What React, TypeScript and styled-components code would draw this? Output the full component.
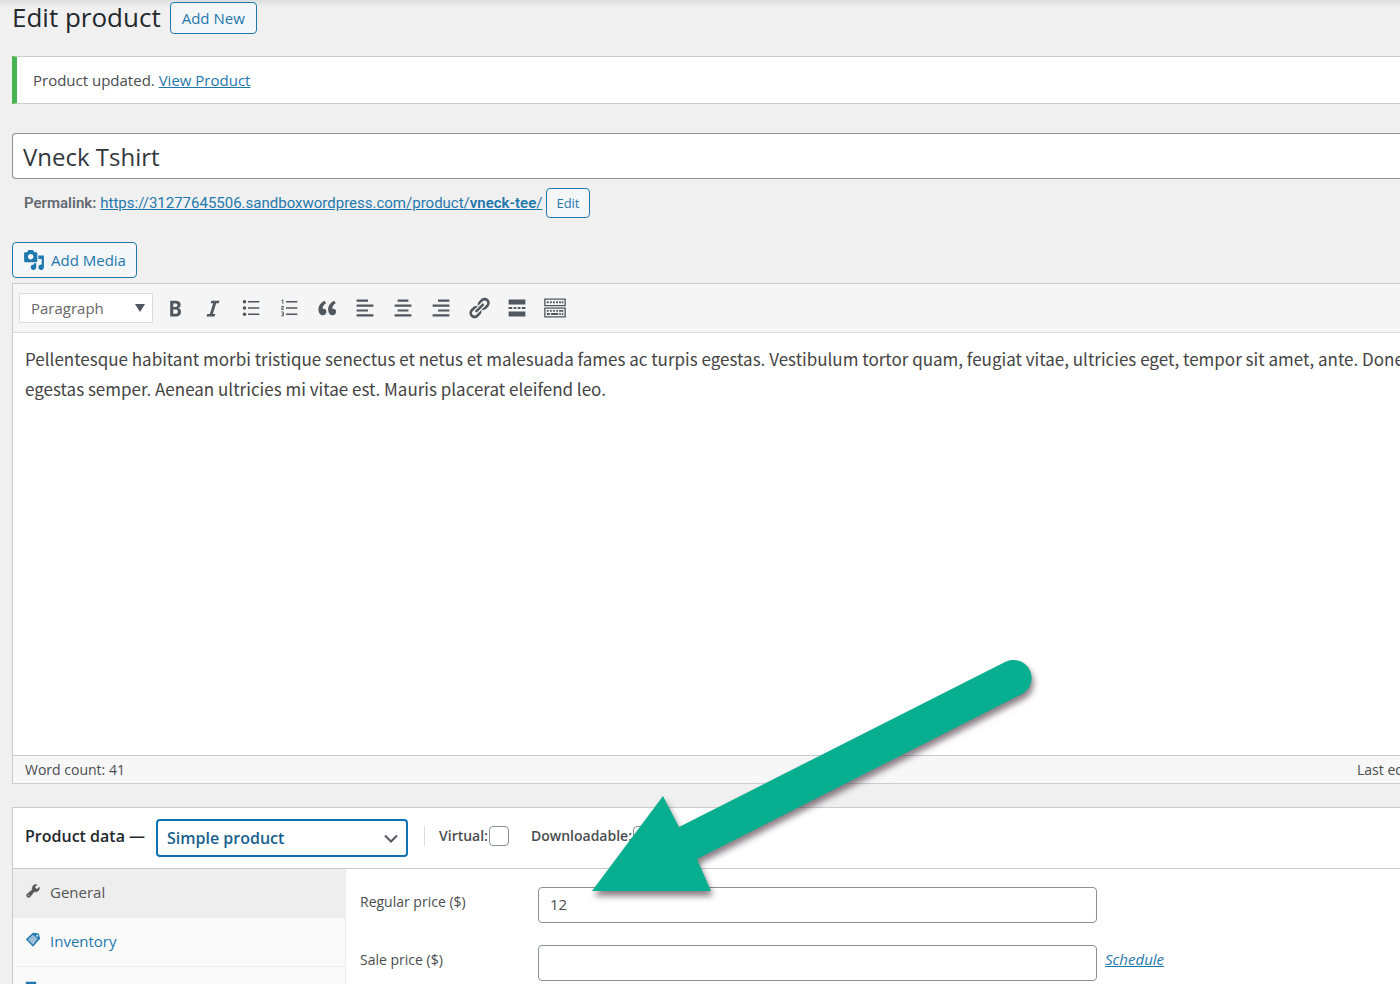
import React from "react";
import styled, { createGlobalStyle, css } from "styled-components";

const GlobalStyle = createGlobalStyle`
  *, *::before, *::after { box-sizing: border-box; }
  body {
    margin: 0;
    background: #f0f0f0;
    color: #4a4d50;
    font: 15px/22px "Open Sans", "Noto Sans", sans-serif;
    overflow: hidden;
  }
  button, input, select { font: inherit; color: inherit; margin: 0; }
`;

const blue = "#1f78ad";
const line = "#c9cbce";

const Page = styled.div`
  position: relative;
  height: 100vh;
  overflow: hidden;
  padding: 1px 0 0 12px;
  background: linear-gradient(#dcdddf, #f0f0f0 8px);
`;

const Header = styled.header`
  display: flex;
  align-items: center;
  gap: 9px;
`;

const Title = styled.h1`
  margin: 0;
  font-size: 26px;
  line-height: 33px;
  font-weight: 400;
  color: #23282d;
`;

const OutlineButton = styled.button<{ $size: "small" | "medium" | "large" }>`
  display: inline-flex;
  align-items: center;
  justify-content: center;
  gap: 6px;
  padding: 0 10px;
  border: 1px solid ${blue};
  border-radius: 4px;
  background: #f4f6f7;
  color: ${blue};
  white-space: nowrap;
  ${({ $size }) =>
    $size === "small"
      ? css`height: 30px; padding: 0 9px; font-size: 13px;`
      : $size === "medium"
      ? css`height: 32px; font-size: 15px; font-weight: 500; padding: 0 11px;`
      : css`height: 36px; font-size: 15px;`}
`;

const Link = styled.a`
  color: ${blue};
  text-decoration: underline;
`;

const Notice = styled.div`
  margin-top: 22px;
  padding: 12px 16px;
  border: 1px solid ${line};
  border-right: 0;
  border-left: 5px solid #46b450;
  background: #fff;
`;

const TitleInput = styled.input`
  display: block;
  width: 100%;
  height: 46px;
  margin-top: 29px;
  padding: 0 10px;
  border: 1px solid #8c8f94;
  border-right: 0;
  border-radius: 4px 0 0 4px;
  background: #fff;
  font-size: 24px;
  color: #32373c;
`;

const Permalink = styled.div`
  display: flex;
  align-items: center;
  gap: 4px;
  margin: 9px 0 24px;
  padding-left: 12px;
  color: #646970;
  font-family: Roboto, "Open Sans", sans-serif;
  button { font-family: "Open Sans", sans-serif; }
`;

const Semi = styled.strong`
  font-weight: 600;
`;

const Editor = styled.section`
  margin-top: 5px;
  border: 1px solid ${line};
  border-right: 0;
  background: #fff;
`;

const Toolbar = styled.div`
  display: flex;
  align-items: center;
  height: 49px;
  padding-left: 6px;
  border-bottom: 1px solid #dcdcde;
  background: #f5f5f5;
`;

const SelectWrap = styled.span`
  position: relative;
  display: inline-flex;
  flex: none;
  svg {
    position: absolute;
    right: 8px;
    top: 0;
    bottom: 0;
    margin: auto 0;
    pointer-events: none;
  }
`;

const FormatSelect = styled.select`
  appearance: none;
  width: 134px;
  height: 30px;
  padding: 0 11px;
  border: 1px solid #dcdcde;
  border-radius: 0;
  background: #fff;
  color: #686868;
`;

const Tools = styled.div`
  display: flex;
  margin-left: 3px;
`;

const ToolButton = styled.button`
  display: grid;
  place-items: center;
  width: 38px;
  height: 34px;
  padding: 0;
  border: 0;
  background: none;
  color: #50575e;
`;

const EditorBody = styled.div`
  height: 422px;
  padding: 11px 12px;
  overflow: hidden;
  white-space: nowrap;
  font: 17px/30px "Noto Sans CJK SC", sans-serif;
  color: #444;
  p { margin: 0; }
`;

const StatusBar = styled.div`
  display: flex;
  justify-content: space-between;
  height: 28px;
  padding-left: 12px;
  border-top: 1px solid ${line};
  background: #f7f7f7;
  font-size: 14px;
  line-height: 28px;
`;

const LastEdit = styled.span`
  width: 43px;
  overflow: hidden;
  white-space: nowrap;
`;

const Panel = styled.section`
  margin-top: 23px;
  border: 1px solid ${line};
  border-right: 0;
  background: #fff;
`;

const PanelHeader = styled.div`
  display: flex;
  align-items: center;
  height: 61px;
  padding: 0 0 4px 12px;
  border-bottom: 1px solid ${line};
`;

const PanelTitle = styled.label`
  width: 131px;
  font-size: 16px;
  font-weight: 600;
  color: #23282d;
  white-space: nowrap;
`;

const TypeWrap = styled(SelectWrap)`
  margin-top: 4px;
`;

const TypeSelect = styled.select`
  appearance: none;
  width: 252px;
  height: 38px;
  padding: 0 9px;
  border: 2px solid #0d72b2;
  border-radius: 4px;
  background: #fff;
  color: #1a5f8e;
  font-size: 16px;
  font-weight: 600;
`;

const Options = styled.div`
  display: flex;
  align-items: center;
  gap: 22px;
  margin-left: 16px;
  padding-left: 14px;
  border-left: 1px solid #dcdcde;
`;

const CheckLabel = styled.label`
  display: flex;
  align-items: center;
  gap: 1px;
  font-size: 14px;
  line-height: 20px;
  font-weight: 600;
`;

const Checkbox = styled.input`
  appearance: none;
  width: 20px;
  height: 20px;
  border: 1px solid #8c8f94;
  border-radius: 4px;
  background: #fff;
`;

const PanelBody = styled.div`
  display: grid;
  grid-template-columns: 333px 1fr;
`;

const Tabs = styled.nav`
  border-right: 1px solid #eee;
  background: #fafafa;
`;

const Tab = styled.a<{ $active?: boolean }>`
  display: flex;
  align-items: center;
  gap: 9px;
  height: 49px;
  padding: 0 0 2px 12px;
  border-bottom: 1px solid #eee;
  background: ${({ $active }) => ($active ? "#eee" : "transparent")};
  color: ${({ $active }) => ($active ? "#555" : blue)};
  text-decoration: none;
  svg { margin-bottom: 3px; }
`;

const Fields = styled.div`
  display: flex;
  flex-direction: column;
  gap: 22px;
  padding: 18px 14px;
`;

const Field = styled.div`
  display: flex;
  align-items: flex-start;
  gap: 8px;
`;

const FieldLabel = styled.label`
  width: 170px;
  padding-top: 4px;
  font-size: 14px;
`;

const FieldLink = styled(Link)`
  padding-top: 3px;
`;

const TextInput = styled.input`
  width: 559px;
  height: 36px;
  padding: 0 11px 2px;
  border: 1px solid #8c8f94;
  border-radius: 4px;
  background: #fff;
`;

const Arrow = styled.svg`
  position: absolute;
  left: 580px;
  top: 650px;
  pointer-events: none;
  filter: drop-shadow(2px 5px 3px rgba(60, 40, 50, 0.6));
`;

const Icon = ({ size = 24, children }: { size?: number; children: React.ReactNode }) => (
  <svg width={size} height={size} viewBox="0 0 20 20" fill="currentColor" aria-hidden="true">
    {children}
  </svg>
);

const tools: { name: string; icon: React.ReactNode }[] = [
  {
    name: "Bold",
    icon: <path d="M6 4v13h4.54c1.37 0 2.46-.33 3.26-1 .8-.66 1.2-1.58 1.2-2.77 0-.84-.17-1.51-.51-2.01s-.9-.85-1.67-1.03v-.09c.57-.1 1.02-.4 1.36-.9s.51-1.13.51-1.91c0-1.14-.39-1.98-1.17-2.5C12.75 4.26 11.5 4 9.78 4H6zm2.57 5.15V6.26h1.36c.73 0 1.27.11 1.61.32.34.22.51.58.51 1.07 0 .54-.16.92-.47 1.15s-.82.35-1.51.35h-1.5zm0 2.19h1.6c1.44 0 2.16.53 2.16 1.61 0 .6-.17 1.05-.51 1.34s-.86.43-1.57.43H8.57v-3.38z" />,
  },
  { name: "Italic", icon: <path d="M14.78 6h-2.13l-2.8 9h2.12l-.62 2H4.6l.62-2h2.14l2.8-9H8.03l.62-2h6.75z" /> },
  {
    name: "Bulleted list",
    icon: (
      <>
        <circle cx="4.6" cy="4.8" r="1.5" />
        <circle cx="4.6" cy="10" r="1.5" />
        <circle cx="4.6" cy="15.2" r="1.5" />
        <path d="M7.5 4.2H17v1.2H7.5zM7.5 9.4H17v1.2H7.5zM7.5 14.6H17v1.2H7.5z" />
      </>
    ),
  },
  {
    name: "Numbered list",
    icon: (
      <>
        <path d="M7.5 4.2H17v1.2H7.5zM7.5 9.4H17v1.2H7.5zM7.5 14.6H17v1.2H7.5z" />
        <path
          d="M3.7 3.8l1.2-.6v3.4M3.6 8.6h1.7v1.3H3.9v1.4h1.7M3.6 13.3h1.7v3.3H3.6M4 15h1.3"
          fill="none"
          stroke="currentColor"
          strokeWidth=".8"
        />
      </>
    ),
  },
  {
    name: "Blockquote",
    icon: <path d="M9.49 13.22c0-.74-.2-1.38-.61-1.9-.62-.78-1.83-.88-2.53-.72-.29-1.65 1.11-3.75 2.92-4.65L7.88 4c-2.73 1.3-5.42 4.28-4.96 8.05C3.21 14.43 4.59 16 6.54 16c.85 0 1.56-.25 2.12-.75s.83-1.18.83-2.03zm8.05 0c0-.74-.2-1.38-.61-1.9-.63-.78-1.83-.88-2.53-.72-.29-1.65 1.11-3.75 2.92-4.65L15.93 4c-2.73 1.3-5.41 4.28-4.95 8.05.29 2.38 1.66 3.95 3.61 3.95.85 0 1.56-.25 2.12-.75s.83-1.18.83-2.03z" />,
  },
  { name: "Align left", icon: <path d="M12.500 4.800V3H3v1.800zM17 8.900V7.100H3v1.800zM12.500 13v-1.800H3V13zM17 17.100v-1.800H3v1.800z" /> },
  { name: "Align center", icon: <path d="M14.500 4.800V3h-9v1.800zM17 8.900V7.100H3v1.800zM14.500 13v-1.800h-9V13zM17 17.100v-1.800H3v1.800z" /> },
  { name: "Align right", icon: <path d="M17 4.800V3H7.500v1.800zM17 8.900V7.100H3v1.800zM17 13v-1.800H7.500V13zM17 17.100v-1.800H3v1.800z" /> },
  {
    name: "Insert link",
    icon: <path d="M17.74 2.76c1.68 1.69 1.68 4.41 0 6.1l-1.53 1.52c-1.12 1.12-2.7 1.47-4.14 1.09l2.62-2.61.76-.77.76-.76c.84-.84.84-2.2 0-3.04-.84-.85-2.2-.85-3.04 0l-.77.76-3.38 3.38c-.37-1.44-.02-3.02 1.1-4.14l1.52-1.53c1.69-1.68 4.42-1.68 6.1 0zM8.59 13.43l5.34-5.34c.42-.42.42-1.1 0-1.52-.44-.43-1.13-.39-1.53 0l-5.33 5.34c-.42.42-.42 1.1 0 1.52.44.43 1.13.39 1.52 0zm-.76 2.29l4.14-4.15c.38 1.44.03 3.02-1.09 4.14l-1.52 1.53c-1.69 1.68-4.41 1.68-6.1 0-1.68-1.68-1.68-4.42 0-6.1l1.53-1.52c1.12-1.12 2.7-1.47 4.14-1.1l-4.14 4.15c-.85.84-.85 2.2 0 3.05.84.84 2.2.84 3.04 0z" />,
  },
  { name: "Read more", icon: <path d="M17 7V3H3v4h14zM6 10.800V9.200H3v1.600h3zm3.400 0V9.200H7.200v1.600h2.200zm3.400 0V9.200h-2.200v1.600h2.200zm4.200 0V9.200h-3v1.600h3zM17 17v-4H3v4h14z" /> },
  {
    name: "Toolbar toggle",
    icon: (
      <>
        <path fillRule="evenodd" d="M1 2h18v6.500H1zM2.100 3.100v4.300h15.800V3.100zM1 9.500h18V18H1zM2.100 10.600v6.300h15.800v-6.300z" />
        <path
          d="M3.200 4.400h1.500V6H3.200zM5.800 4.400h1.500V6H5.800zM8.400 4.400h1.500V6H8.400zM11 4.400h1.500V6H11zM13.400 4.400h1.500V6h-1.500zM15.600 4.400h1.300V6h-1.300zM3.200 11.700h1.500v1.500H3.200zM5.800 11.700h1.500v1.500H5.800zM8.400 11.700h1.500v1.500H8.400zM11 11.700h1.500v1.500H11zM13.400 11.700h3.500v1.500h-3.500zM3.200 14.200h2.500v1.600H3.200zM6.700 14.200h6v1.600h-6zM13.600 14.200h1.200v1.600h-1.200zM15.700 14.200h1.200v1.600h-1.200z"
        />
      </>
    ),
  },
];

export default function App() {
  return (
    <Page>
      <GlobalStyle />
      <Header>
        <Title>Edit product</Title>
        <OutlineButton $size="medium">Add New</OutlineButton>
      </Header>

      <Notice>
        Product updated. <Link href="#view">View Product</Link>
      </Notice>

      <TitleInput aria-label="Product name" defaultValue="Vneck Tshirt" />

      <Permalink>
        <Semi>Permalink:</Semi>
        <Link href="#permalink">
          https://31277645506.sandboxwordpress.com/product/<Semi>vneck-tee</Semi>/
        </Link>
        <OutlineButton $size="small">Edit</OutlineButton>
      </Permalink>

      <OutlineButton $size="large">
        <Icon size={22}>
          <path d="M13 11V4c0-.55-.45-1-1-1h-1.67L9 1H5L3.67 3H2c-.55 0-1 .45-1 1v7c0 .55.45 1 1 1h10c.55 0 1-.45 1-1zM7 4.5c1.38 0 2.5 1.12 2.5 2.5S8.38 9.5 7 9.5 4.5 8.38 4.5 7 5.62 4.5 7 4.5zM14 6h5v10.5c0 1.38-1.12 2.5-2.5 2.5S14 17.88 14 16.5s1.12-2.5 2.5-2.5c.17 0 .34.02.5.05V9h-3V6zm-4 8.05V13h2v3.5c0 1.38-1.12 2.5-2.5 2.5S7 17.88 7 16.5 8.12 14 9.5 14c.17 0 .34.02.5.05z" />
        </Icon>
        Add Media
      </OutlineButton>

      <Editor>
        <Toolbar>
          <SelectWrap>
            <FormatSelect aria-label="Text format">
              <option>Paragraph</option>
            </FormatSelect>
            <svg width="10" height="8" viewBox="0 0 10 8" fill="#50575e">
              <path d="M0 0h10L5 8z" />
            </svg>
          </SelectWrap>
          <Tools>
            {tools.map(({ name, icon }) => (
              <ToolButton key={name} aria-label={name}>
                <Icon>{icon}</Icon>
              </ToolButton>
            ))}
          </Tools>
        </Toolbar>
        <EditorBody>
          <p>
            Pellentesque habitant morbi tristique senectus et netus et malesuada fames ac turpis egestas. Vestibulum
            tortor quam, feugiat vitae, ultricies eget, tempor sit amet, ante. Donec
            <br />
            egestas semper. Aenean ultricies mi vitae est. Mauris placerat eleifend leo.
          </p>
        </EditorBody>
        <StatusBar>
          <span>Word count: 41</span>
          <LastEdit>Last edited</LastEdit>
        </StatusBar>
      </Editor>

      <Panel>
        <PanelHeader>
          <PanelTitle htmlFor="product-type">Product data —</PanelTitle>
          <TypeWrap>
            <TypeSelect id="product-type">
              <option>Simple product</option>
            </TypeSelect>
            <svg width="18" height="18" viewBox="0 0 18 18" fill="none" stroke="#50575e" strokeWidth="2">
              <path d="M3 6.500l6 6 6-6" />
            </svg>
          </TypeWrap>
          <Options>
            <CheckLabel>
              Virtual:
              <Checkbox type="checkbox" />
            </CheckLabel>
            <CheckLabel>
              Downloadable:
              <Checkbox type="checkbox" />
            </CheckLabel>
          </Options>
        </PanelHeader>
        <PanelBody>
          <Tabs>
            <Tab href="#general" $active>
              <Icon size={16}>
                <path stroke="currentColor" strokeWidth=".6" d="M16.68 9.77c-1.34 1.34-3.3 1.67-4.95.99l-5.41 6.52c-.99.99-2.59.99-3.58 0s-.99-2.59 0-3.57l6.52-5.42c-.68-1.65-.35-3.61.99-4.95 1.28-1.28 3.12-1.62 4.72-1.06l-2.89 2.89 2.82 2.82 2.86-2.87c.53 1.58.18 3.39-1.08 4.65zM3.81 16.21c.4.39 1.04.39 1.43 0 .4-.4.4-1.04 0-1.43-.39-.4-1.03-.4-1.43 0-.39.39-.39 1.03 0 1.43z" />
              </Icon>
              General
            </Tab>
            <Tab href="#inventory">
              <Icon size={16}>
                <path d="M1 9L10 1l7 1 2 6-9 10.500z" />
                <path d="M3.500 9.300L10 3.300l5.800 5-5.800 7.500z" fill="#9dbdd6" />
                <circle cx="15.300" cy="4.600" r="1.200" fill="#fff" />
              </Icon>
              Inventory
            </Tab>
            <Tab href="#shipping">
              <Icon size={16}>
                <path d="M1 1h13v12H1zM15 5h2l2 3v5h-4zM4 14h3v2H4zM13 14h3v2h-3z" />
              </Icon>
              Shipping
            </Tab>
          </Tabs>
          <Fields>
            <Field>
              <FieldLabel htmlFor="regular-price">Regular price ($)</FieldLabel>
              <TextInput id="regular-price" defaultValue="12" />
            </Field>
            <Field>
              <FieldLabel htmlFor="sale-price">Sale price ($)</FieldLabel>
              <TextInput id="sale-price" />
              <FieldLink href="#schedule">
                <em>Schedule</em>
              </FieldLink>
            </Field>
          </Fields>
        </PanelBody>
      </Panel>

      <Arrow width="470" height="260" viewBox="580 650 470 260" aria-hidden="true">
        <path d="M592 891L663 796 679 827 1005 662A18 18 0 0 1 1022 694L697 859 711 891z" fill="#07ae90" />
      </Arrow>
    </Page>
  );
}
